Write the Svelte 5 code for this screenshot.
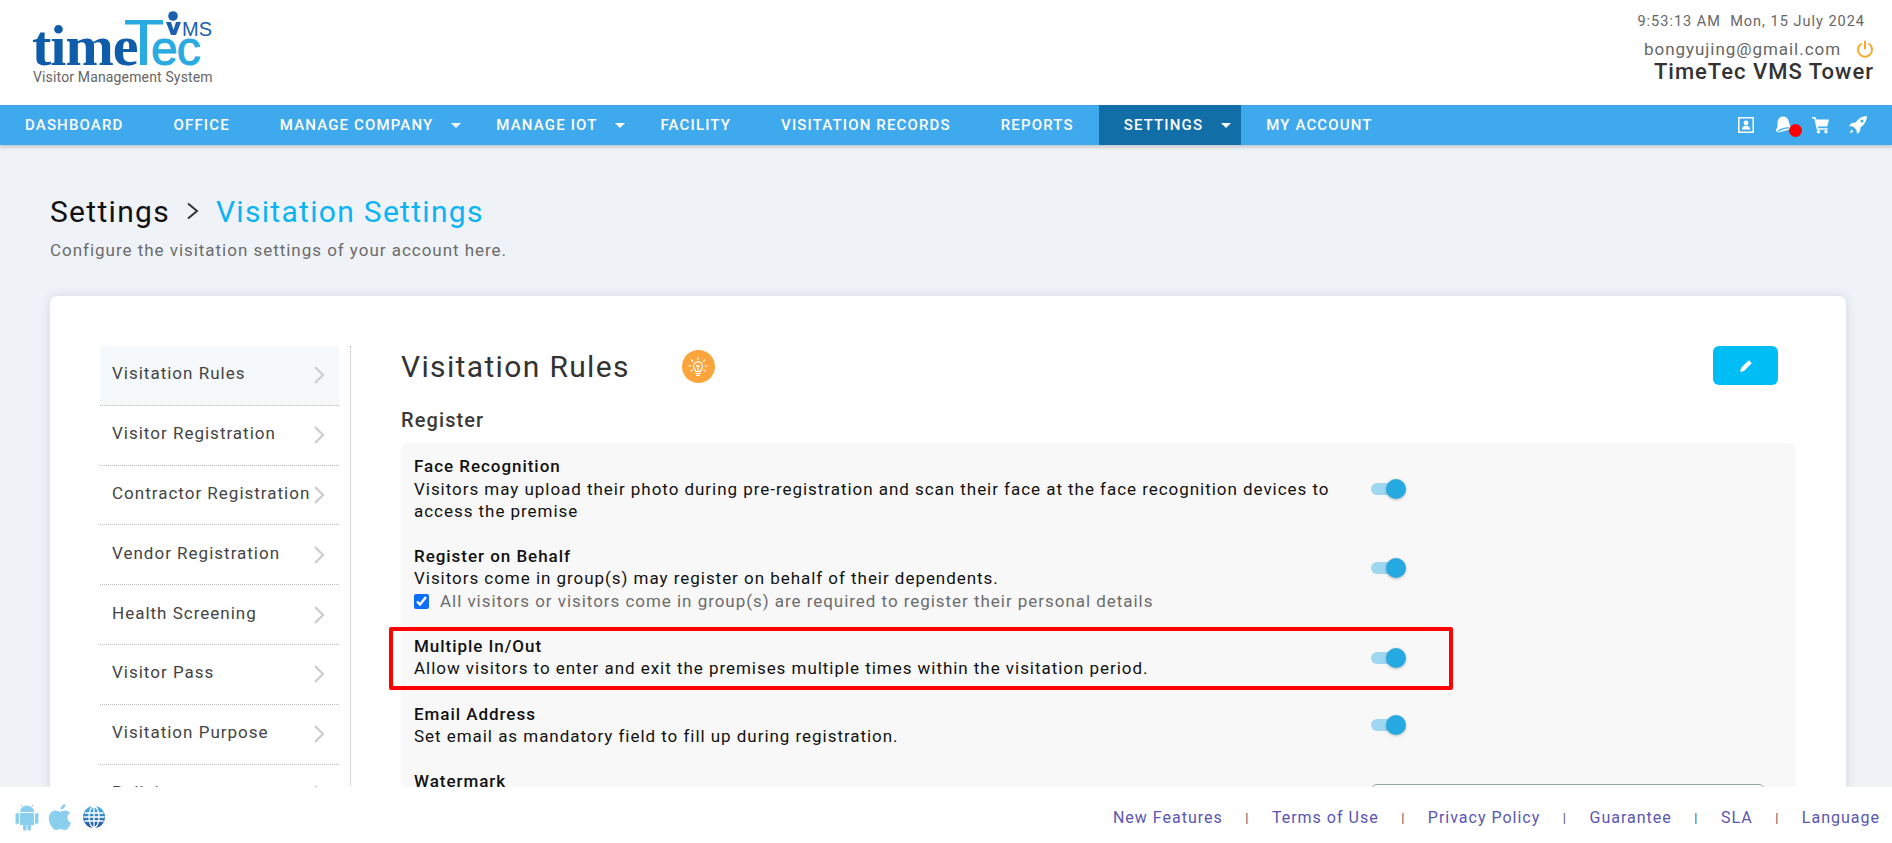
<script>
  const navItems = [
    { label: "DASHBOARD" },
    { label: "OFFICE" },
    { label: "MANAGE COMPANY", caret: true },
    { label: "MANAGE IOT", caret: true },
    { label: "FACILITY" },
    { label: "VISITATION RECORDS" },
    { label: "REPORTS" },
    { label: "SETTINGS", caret: true, active: true },
    { label: "MY ACCOUNT" }
  ];

  const sideItems = [
    "Visitation Rules",
    "Visitor Registration",
    "Contractor Registration",
    "Vendor Registration",
    "Health Screening",
    "Visitor Pass",
    "Visitation Purpose",
    "Policies"
  ];

  const footerLinks = ["New Features", "Terms of Use", "Privacy Policy", "Guarantee", "SLA", "Language"];
</script>

{#snippet toggle()}
  <span class="toggle"><span class="track"></span><span class="knob"></span></span>
{/snippet}

<div class="page">
  <header class="top">
    <svg class="logo" width="240" height="90" viewBox="0 0 240 90">
      <text x="32" y="65" class="logo-time">time</text>
      <path d="M125 20h38v4.500h-16V65h-7V24.500h-15z" fill="#29abe2" />
      <text x="151" y="65" class="logo-tec">ec</text>
      <circle cx="173" cy="16" r="4.800" fill="#1b5fae" />
      <path d="M166 22h5l2.500 8 2.500-8h5l-5 13h-5z" fill="#1b5fae" />
      <text x="182" y="36" class="logo-vms">MS</text>
      <text x="33" y="82" class="logo-sub">Visitor Management System</text>
    </svg>
    <div class="account">
      <div class="clock">9:53:13 AM&nbsp; Mon, 15 July 2024</div>
      <div class="email">
        <span>bongyujing@gmail.com</span>
        <svg width="18" height="18" viewBox="0 0 18 18" fill="none" stroke="#f9a72b" stroke-width="2" stroke-linecap="round">
          <path d="M9 1.500v7" />
          <path d="M5 4a7 7 0 1 0 8 0" />
        </svg>
      </div>
      <div class="tower">TimeTec VMS Tower</div>
    </div>
  </header>

  <nav class="nav">
    <ul class="menu">
      {#each navItems as item}
        <li class="menu-item" class:active={item.active} class:has-caret={item.caret}>
          {item.label}
          {#if item.caret}<span class="caret"></span>{/if}
        </li>
      {/each}
    </ul>
    <div class="nav-icons">
      <svg width="18" height="18" viewBox="0 0 18 18">
        <path fill="#fff" fill-rule="evenodd" d="M1 1h16v16H1zM2.500 2.500v13h13v-13z" />
        <circle cx="9" cy="7" r="2.400" fill="#fff" />
        <path d="M4.800 13.500c.3-2.800 2-3.700 4.200-3.700s3.900.9 4.200 3.700z" fill="#fff" />
      </svg>
      <span class="bell">
        <svg width="22" height="20" viewBox="0 0 22 20" fill="none">
          <path d="M8 1.500c3.500 0 5.500 2.500 6 6l2.500 6.500-13 3.500C1.500 17 1 16 1 14.500l1.500-2.500V8c0-3.500 2-6.500 5.500-6.500z" fill="#fff" />
          <path d="M3 16.500c2-2 7-4 11-3.500" stroke="#3fa9ee" stroke-width="1.200" />
        </svg>
        <span class="dot"></span>
      </span>
      <svg width="20" height="18" viewBox="0 0 20 18" fill="#fff">
        <path d="M1 1h3.500l.8 2.500H18l-1.800 7H7l.4 1.700h9.200v1.600H5.800L3.300 2.600H1z" />
        <circle cx="7.500" cy="15.800" r="1.700" />
        <circle cx="15" cy="15.800" r="1.700" />
      </svg>
      <svg width="20" height="20" viewBox="0 0 20 20" fill="#fff">
        <path d="M19 1c-5 .3-8.500 2.500-11.500 6.500L3.500 8 1 11l4 .5 3.500 3.500.5 4 3-2.500.5-4C16.500 9.500 18.700 6 19 1zm-5 3.500a1.500 1.500 0 1 1 0 3 1.500 1.500 0 0 1 0-3z" fill-rule="evenodd" />
        <path d="M3.500 14.500 1.500 18.500l4-2z" />
      </svg>
    </div>
  </nav>

  <main class="main">
    <div class="crumbs">
      <span class="crumb">Settings</span>
      <svg width="14" height="20" viewBox="0 0 14 20" fill="none" stroke="#333" stroke-width="2"><path d="M2 2.500 11 10l-9 7.500" /></svg>
      <span class="crumb current">Visitation Settings</span>
    </div>
    <p class="lead">Configure the visitation settings of your account here.</p>

    <section class="card">
      <aside class="side">
        {#each sideItems as name, i}
          <div class="side-item" class:selected={i === 0}>
            <span>{name}</span>
            <svg width="12" height="20" viewBox="0 0 12 20" fill="none" stroke="#ccc" stroke-width="2.200"><path d="M2 2l8 8-8 8" /></svg>
          </div>
        {/each}
      </aside>

      <div class="content">
        <div class="title-row">
          <h1>Visitation Rules</h1>
          <span class="tip">
            <svg width="24" height="24" viewBox="0 0 24 24" fill="none" stroke="#fff" stroke-width="1.200" stroke-linecap="round">
              <path d="M9.500 16.500c0-2-2-2.800-2-5.200a4.500 4.500 0 0 1 9 0c0 2.400-2 3.200-2 5.200z" />
              <path d="M9.800 18.500h4.400M10.500 20.300h3M12 16v-4M10.500 10.500 12 12l1.500-1.500" />
              <path d="M12 2.500v1.800M5.500 5 6.800 6.300M18.500 5l-1.300 1.300M3 11h1.800M19.200 11H21M5 16l1.300-1M19 16l-1.300-1" />
            </svg>
          </span>
          <button class="edit" aria-label="Edit">
            <svg width="14" height="14" viewBox="0 0 14 14" fill="#fff">
              <path d="M9.800 1.200 12.800 4.200 5 12 1 13l1-4z" />
            </svg>
          </button>
        </div>

        <h2>Register</h2>

        <div class="panel">
          <div class="rule face">
            <div class="rule-text">
              <b>Face Recognition</b>
              <p>Visitors may upload their photo during pre-registration and scan their face at the face recognition devices to access the premise</p>
            </div>
            {@render toggle()}
          </div>

          <div class="rule behalf">
            <div class="rule-text">
              <b>Register on Behalf</b>
              <p>Visitors come in group(s) may register on behalf of their dependents.</p>
              <label class="check"><input type="checkbox" checked /> All visitors or visitors come in group(s) are required to register their personal details</label>
            </div>
            {@render toggle()}
          </div>

          <div class="rule multi">
            <span class="highlight"></span>
            <div class="rule-text">
              <b>Multiple In/Out</b>
              <p>Allow visitors to enter and exit the premises multiple times within the visitation period.</p>
            </div>
            {@render toggle()}
          </div>

          <div class="rule email-rule">
            <div class="rule-text">
              <b>Email Address</b>
              <p>Set email as mandatory field to fill up during registration.</p>
            </div>
            {@render toggle()}
          </div>

          <div class="rule watermark">
            <div class="rule-text"><b>Watermark</b></div>
            <span class="select"></span>
          </div>
        </div>
      </div>
    </section>
  </main>

  <footer class="foot">
    <div class="apps">
      <svg width="24" height="28" viewBox="0 0 24 28" fill="#8bcfee">
        <path d="M5 9a7 6.500 0 0 1 14 0zM5 10h14v12h-3v4a1.800 1.800 0 0 1-3.600 0v-4h-.8v4a1.800 1.800 0 0 1-3.600 0v-4H5z" />
        <rect x="0.500" y="10" width="3.500" height="11" rx="1.700" />
        <rect x="20" y="10" width="3.500" height="11" rx="1.700" />
        <path d="M7 4 6 1.500M17 4l1-2.500" stroke="#c5c5d5" stroke-width="1" />
      </svg>
      <svg width="25" height="28" viewBox="0 0 25 28" fill="#8bcfee">
        <path d="M17.500 1c.2 3-2.300 5.600-5 5.500-.2-2.800 2.300-5.300 5-5.500z" />
        <path d="M7.500 7.500c2 0 3.500 1.200 4.800 1.200 1.200 0 3-1.400 5.300-1.200 1.700.1 3.400.9 4.500 2.500-4 2.500-3.300 8 1 9.700-1 2.800-3.500 7.300-6 7.300-1.700 0-2.500-1.100-4.500-1.100s-3 1.100-4.500 1.100C4.500 27 .8 20 .8 15.500c0-5 3-8 6.700-8z" />
      </svg>
      <svg width="24" height="24" viewBox="0 0 24 24">
        <defs><linearGradient id="globe" x1="0" y1="0" x2="0" y2="1"><stop offset="0" stop-color="#4fb3e8" /><stop offset="1" stop-color="#1b4f9e" /></linearGradient></defs>
        <circle cx="12" cy="12" r="11" fill="url(#globe)" />
        <g fill="none" stroke="#fff" stroke-width="1.300">
          <ellipse cx="12" cy="12" rx="5" ry="10.500" />
          <path d="M12 1.500v21M2.500 8h19M1.500 12h21M2.500 16h19" />
        </g>
      </svg>
    </div>
    <div class="links">
      {#each footerLinks as link, i}
        {#if i > 0}<span class="sep">|</span>{/if}
        <span class="link">{link}</span>
      {/each}
    </div>
  </footer>
</div>

<style>
  :global(body) {
    background: #fff;
    font-family: Roboto, "Liberation Sans", sans-serif;
    overflow: hidden;
  }

  .page {
    height: 843px;
    display: flex;
    flex-direction: column;
    overflow: hidden;
  }

  .top {
    height: 105px;
    flex: none;
    display: flex;
    justify-content: space-between;
    background: #fff;
  }

  .logo-time {
    font: bold 58px "Liberation Serif", serif;
    fill: #0f5cab;
    letter-spacing: -1px;
  }
  .logo-tec {
    font: 48px "Liberation Sans", sans-serif;
    fill: #29abe2;
    stroke: #29abe2;
    stroke-width: 1px;
    letter-spacing: -1px;
  }
  .logo-vms {
    font: 20px "Liberation Sans", sans-serif;
    fill: #1b5fae;
  }
  .logo-sub {
    font: 14px Roboto, sans-serif;
    fill: #666;
    letter-spacing: 0.15px;
  }

  .account {
    padding: 13px 18px 0 0;
    display: flex;
    flex-direction: column;
    align-items: flex-end;
  }
  .clock {
    font-size: 14.500px;
    line-height: 18px;
    letter-spacing: 1px;
    color: #666;
    padding-right: 9px;
  }
  .email {
    display: flex;
    align-items: center;
    gap: 15px;
    margin-top: 7px;
    font-size: 17px;
    line-height: 22px;
    letter-spacing: 0.950px;
    color: #666;
  }
  .tower {
    font-size: 22px;
    font-weight: 500;
    line-height: 24px;
    color: #333;
    letter-spacing: 1px;
  }

  .nav {
    height: 40px;
    flex: none;
    display: flex;
    justify-content: space-between;
    align-items: center;
    background: #3fa9ee;
    box-shadow: 0 2px 4px rgba(0, 0, 0, 0.2);
    position: relative;
    z-index: 2;
  }
  .menu {
    display: flex;
    height: 100%;
    margin: 0;
    padding: 0;
    list-style: none;
  }
  .menu-item {
    display: flex;
    align-items: center;
    padding: 0 25px;
    font-size: 15px;
    font-weight: 500;
    letter-spacing: 1.150px;
    color: #fff;
    white-space: nowrap;
  }
  .menu-item.has-caret {
    padding-right: 10px;
    gap: 18px;
  }
  .menu-item.active {
    background: #126ea7;
  }
  .caret {
    width: 0;
    height: 0;
    border-left: 5px solid transparent;
    border-right: 5px solid transparent;
    border-top: 5px solid #fff;
  }
  .nav-icons {
    display: flex;
    align-items: center;
    gap: 17px;
    padding-right: 24px;
  }
  .bell {
    position: relative;
    display: flex;
    margin: 0 -3px 0 3px;
  }
  .dot {
    position: absolute;
    right: -5px;
    bottom: -2px;
    width: 13px;
    height: 13px;
    border-radius: 50%;
    background: #f00;
  }

  .main {
    flex: 1;
    min-height: 0;
    overflow: hidden;
    padding: 0 46px 0 50px;
    background: #eff2f7;
  }
  .crumbs {
    display: flex;
    align-items: center;
    gap: 16px;
    margin-top: 48px;
    height: 36px;
  }
  .crumb {
    font-size: 30px;
    letter-spacing: 1.300px;
    color: #111;
  }
  .crumb.current {
    color: #0ab4f4;
  }
  .lead {
    margin: 10px 0 0;
    font-size: 17px;
    line-height: 22px;
    letter-spacing: 0.970px;
    color: #6c6c6c;
  }

  .card {
    margin-top: 35px;
    height: 640px;
    display: flex;
    padding: 50px 50px 0;
    background: #fff;
    border-radius: 8px;
    box-shadow: 0 0 12px rgba(60, 70, 90, 0.14);
  }
  .side {
    width: 239px;
    flex: none;
    padding-right: 11px;
    border-right: 1px dotted #bbb;
    box-sizing: content-box;
  }
  .side-item {
    height: 59.800px;
    box-sizing: border-box;
    display: flex;
    justify-content: space-between;
    align-items: center;
    padding: 0 14px 0 12px;
    border-bottom: 1px dotted #bbb;
    font-size: 17px;
    letter-spacing: 1px;
    color: #444;
    white-space: nowrap;
  }
  .side-item span {
    margin-top: -4px;
  }
  .side-item.selected {
    background: #f6f9fb;
  }

  .content {
    flex: 1;
    min-width: 0;
    padding-left: 50px;
  }
  .title-row {
    display: flex;
    align-items: center;
    height: 41px;
  }
  h1 {
    margin: 0;
    font-size: 30px;
    font-weight: 400;
    letter-spacing: 1.350px;
    color: #333;
  }
  .tip {
    display: flex;
    align-items: center;
    justify-content: center;
    width: 33px;
    height: 33px;
    margin-left: 52px;
    border-radius: 50%;
    background: #fba53c;
  }
  .edit {
    margin: -2px 18px 0 auto;
    width: 65px;
    height: 39px;
    border: 0;
    border-radius: 6px;
    background: #00bdf6;
    display: flex;
    align-items: center;
    justify-content: center;
  }
  h2 {
    margin: 18px 0 0;
    height: 38px;
    font-size: 20px;
    font-weight: 500;
    line-height: 30px;
    letter-spacing: 1.100px;
    color: #3a3a3a;
  }

  .panel {
    background: #f8f8f8;
    border-radius: 8px;
    padding: 12px 12px 0 13px;
    height: 500px;
  }
  .rule {
    position: relative;
    display: flex;
    align-items: center;
  }
  .rule-text {
    width: 956px;
    flex: none;
    font-size: 17px;
    line-height: 22.600px;
    letter-spacing: 0.960px;
    color: #111;
  }
  .rule-text b {
    display: block;
    font-weight: 500;
  }
  .rule-text p {
    margin: 0;
  }
  .behalf {
    margin-top: 22px;
  }
  .behalf .toggle {
    margin-bottom: 22px;
  }
  .multi {
    margin-top: 22px;
  }
  .multi .toggle {
    margin-top: 2px;
  }
  .email-rule {
    margin-top: 23px;
  }
  .watermark {
    margin-top: 22px;
    align-items: flex-start;
  }
  .check {
    display: flex;
    align-items: center;
    gap: 11px;
    color: #6c6c6c;
  }
  .check input {
    width: 15px;
    height: 15px;
    margin: 0;
    accent-color: #0d6efd;
  }
  .highlight {
    position: absolute;
    left: -25px;
    right: 331px;
    top: -8px;
    bottom: -10px;
    border: 4px solid #f00;
    border-radius: 2px;
    pointer-events: none;
  }
  .toggle {
    position: relative;
    display: block;
    width: 35px;
    height: 20px;
    margin-left: 1px;
    flex: none;
  }
  .track {
    position: absolute;
    left: 0;
    top: 4px;
    width: 30px;
    height: 12px;
    border-radius: 6px;
    background: #9fd6f0;
  }
  .knob {
    position: absolute;
    right: 0;
    top: 0;
    width: 20px;
    height: 20px;
    border-radius: 50%;
    background: #25a9e0;
    box-shadow: 0 1px 3px rgba(0, 0, 0, 0.25);
  }
  .select {
    display: block;
    width: 392px;
    height: 40px;
    margin-left: 1px;
    margin-top: 14px;
    background: #fff;
    border: 1px solid #90a4ae;
    border-radius: 6px;
  }

  .foot {
    height: 56px;
    flex: none;
    box-sizing: border-box;
    display: flex;
    justify-content: space-between;
    align-items: center;
    background: #fff;
    padding: 4px 12px 0 15px;
    position: relative;
    z-index: 2;
  }
  .apps {
    display: flex;
    align-items: center;
    gap: 9px;
  }
  .links {
    display: flex;
    align-items: center;
    gap: 22.500px;
    font-size: 16px;
    letter-spacing: 1px;
    color: #5a55b4;
  }
  .sep {
    color: #555;
    font-size: 13px;
  }
</style>
